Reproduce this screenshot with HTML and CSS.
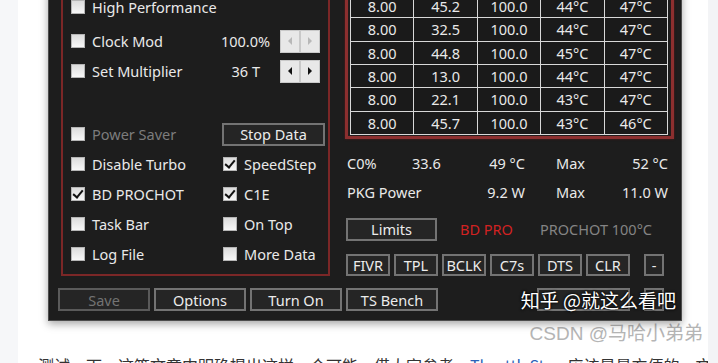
FILE: index.html
```html
<!DOCTYPE html>
<html lang="zh-CN">
<head>
  <meta charset="UTF-8">
  <meta name="viewport" content="width=device-width, initial-scale=1.0">
  <title>ThrottleStop 截图</title>
  <link rel="stylesheet" href="styles.css">
</head>
<body>
  <div class="page">
    <div class="gutter"></div>

    <main class="article">
      <div class="ts-window">
        <div class="ts-top">
          <section class="opts">
            <label class="row first"><span class="cb"></span>High Performance</label>

            <div class="row">
              <label class="grow"><span class="cb"></span>Clock Mod</label>
              <span class="val">100.0%</span>
              <span class="spin off"><i class="left"></i><i class="right"></i></span>
            </div>

            <div class="row spaced">
              <label class="grow"><span class="cb"></span>Set Multiplier</label>
              <span class="val mult">36 T</span>
              <span class="spin"><i class="left"></i><i class="right"></i></span>
            </div>

            <div class="checks">
              <label class="row disabled"><span class="cb"></span>Power Saver</label>
              <div class="row"><button class="btn stop">Stop Data</button></div>
              <label class="row"><span class="cb"></span>Disable Turbo</label>
              <label class="row"><span class="cb on"></span>SpeedStep</label>
              <label class="row"><span class="cb on"></span>BD PROCHOT</label>
              <label class="row"><span class="cb on"></span>C1E</label>
              <label class="row"><span class="cb"></span>Task Bar</label>
              <label class="row"><span class="cb"></span>On Top</label>
              <label class="row"><span class="cb"></span>Log File</label>
              <label class="row"><span class="cb"></span>More Data</label>
            </div>
          </section>

          <section class="readout">
            <div class="grid-frame">
              <table class="cores">
                <tr><td>8.00</td><td>45.2</td><td>100.0</td><td>44°C</td><td>47°C</td></tr>
                <tr><td>8.00</td><td>32.5</td><td>100.0</td><td>44°C</td><td>47°C</td></tr>
                <tr><td>8.00</td><td>44.8</td><td>100.0</td><td>45°C</td><td>47°C</td></tr>
                <tr><td>8.00</td><td>13.0</td><td>100.0</td><td>44°C</td><td>47°C</td></tr>
                <tr><td>8.00</td><td>22.1</td><td>100.0</td><td>43°C</td><td>47°C</td></tr>
                <tr><td>8.00</td><td>45.7</td><td>100.0</td><td>43°C</td><td>46°C</td></tr>
              </table>
            </div>

            <div class="stats">
              <span>C0%</span><span>33.6</span><span class="num">49 °C</span><span></span><span>Max</span><span class="num">52 °C</span>
              <span class="wide">PKG Power</span><span class="num">9.2 W</span><span></span><span>Max</span><span class="num">11.0 W</span>
            </div>

            <div class="limits-row">
              <button class="btn limits">Limits</button>
              <span class="bdpro">BD PRO</span>
              <span class="prochot">PROCHOT 100°C</span>
            </div>

            <div class="tool-row">
              <button class="btn small">FIVR</button>
              <button class="btn small">TPL</button>
              <button class="btn small">BCLK</button>
              <button class="btn small">C7s</button>
              <button class="btn small">DTS</button>
              <button class="btn small">CLR</button>
              <button class="btn tiny">-</button>
            </div>
          </section>
        </div>

        <div class="ts-bottom">
          <button class="btn wide-btn" disabled>Save</button>
          <button class="btn wide-btn">Options</button>
          <button class="btn wide-btn">Turn On</button>
          <button class="btn wide-btn">TS Bench</button>
          <button class="btn wide-btn gui"></button>
          <button class="btn tiny"></button>
        </div>

        <div class="watermark">知乎 @就这么看吧</div>
      </div>

      <p class="credit">CSDN @马哈小弟弟</p>
      <p class="body-text">测试一下，这篇文章中明确提出这样一个可能，借大家参考。<a href="#">ThrottleStop</a> 应该是最方便的，文中问题</p>
    </main>

    <div class="scrollbar"></div>
  </div>
</body>
</html>
```

FILE: styles.css
```css
* {
  box-sizing: border-box;
  margin: 0;
  padding: 0;
}

body {
  font-family: 'Noto Sans', 'Noto Sans CJK SC', sans-serif;
  background-color: #fff;
  overflow: hidden;
}

.page {
  display: flex;
  height: 363px;
}

.gutter {
  width: 18px;
  flex-shrink: 0;
  background-color: #f6f7f9;
}

.article {
  flex: 1;
  min-width: 0;
  overflow: hidden;
  padding: 0 5px 0 20px;
}

.scrollbar {
  width: 10px;
  flex-shrink: 0;
  background-color: #f3f4f6;
}

/* screenshot of the tool */
.ts-window {
  position: relative;
  width: 634px;
  margin: -33px 0 8px 10px;
  padding: 12px 7px 9px 12px;
  background-color: #1d1d1d;
  border: 1px solid #4d4d4d;
  box-shadow: 0 3px 8px rgba(0,0,0,0.35);
  color: #e9e9e9;
  font-size: 14.5px;
}

.ts-top {
  display: grid;
  grid-template-columns: 269px 329px;
  column-gap: 15px;
  align-items: start;
}

.opts {
  border: 2px solid #7b2727;
  padding: 10px 8px 5px 8px;
}

.row {
  display: flex;
  align-items: center;
  height: 30px;
}

.row.first {
  margin-bottom: 4px;
}

.row.spaced {
  margin-bottom: 33px;
}

.grow {
  flex: 1;
  display: flex;
  align-items: center;
}

.val {
  width: 80px;
  text-align: right;
  margin-right: 10px;
}

.val.mult {
  padding-right: 10px;
}

.checks {
  display: grid;
  grid-template-columns: 152px 1fr;
}

.disabled {
  color: #7c7c7c;
}

.cb {
  width: 14px;
  height: 14px;
  margin-right: 7px;
  background: linear-gradient(#dcdcdc, #f7f7f7);
  border: 1px solid #b5b5b5;
  flex-shrink: 0;
  position: relative;
}

.cb.on::after {
  content: "";
  position: absolute;
  left: 3px;
  top: 0px;
  width: 4px;
  height: 8px;
  border: solid #111;
  border-width: 0 2px 2px 0;
  transform: rotate(40deg);
}

.spin {
  display: flex;
  height: 23px;
}

.spin i {
  width: 20px;
  background-color: #e8e8e8;
  border: 1px solid #c9c9c9;
  display: flex;
  align-items: center;
  justify-content: center;
}

.spin i::before {
  content: "";
  border-top: 4px solid transparent;
  border-bottom: 4px solid transparent;
}

.spin .left::before {
  border-right: 4px solid #111;
}

.spin .right::before {
  border-left: 4px solid #111;
}

.spin.off .left::before {
  border-right-color: #b8b8b8;
}

.spin.off .right::before {
  border-left-color: #b8b8b8;
}

.btn {
  font-family: inherit;
  font-size: 14.5px;
  color: #ececec;
  background-color: #252525;
  border: 2px solid #737373;
  height: 23px;
  line-height: 18px;
}

.btn:disabled {
  color: #737373;
  border-color: #5a5a5a;
}

.btn.stop {
  width: 103px;
  margin-left: -1px;
}

/* core table */
.grid-frame {
  margin-top: 8px;
  border: 3px solid #8c2f2f;
  box-shadow: 0 0 2px #5a1a1a, inset 0 0 1px #5a1a1a;
  padding: 0 0 1px 2px;
}

.cores {
  margin-top: 3px;
  width: 318px;
  border-collapse: collapse;
  table-layout: fixed;
}

.cores td {
  height: 23.33px;
  border: 1px solid #d8d8d8;
  text-align: center;
  background-color: #1a1a1a;
  padding: 0;
  line-height: 18px;
}

.stats {
  display: grid;
  grid-template-columns: 65px 60px 53px 31px 50px 62px;
  grid-auto-rows: 29px;
  align-items: center;
  margin-top: 10px;
  padding-left: 2px;
}

.stats .wide {
  grid-column: span 2;
}

.num {
  text-align: right;
}

.limits-row {
  display: flex;
  align-items: center;
  margin-top: 11px;
  padding-left: 1px;
}

.btn.limits {
  width: 91px;
  margin-right: 23px;
}

.bdpro {
  color: #d22222;
  width: 80px;
}

.prochot {
  color: #848484;
}

.tool-row {
  display: flex;
  gap: 4px;
  margin-top: 13px;
  padding-left: 1px;
}

.btn.small {
  width: 44px;
  height: 22px;
  padding: 0;
}

.btn.tiny {
  width: 20px;
  height: 22px;
  margin-left: 10px;
  padding: 0;
}

.ts-bottom {
  display: flex;
  gap: 4px;
  margin: 12px 0 0 -3px;
}

.btn.wide-btn {
  width: 92px;
}

.btn.gui {
  width: 93px;
  margin-left: 95px;
}

.ts-bottom .btn.tiny {
  height: 23px;
}

.watermark {
  position: absolute;
  right: 5px;
  bottom: 9px;
  font-family: 'Noto Sans CJK SC', sans-serif;
  font-size: 19px;
  line-height: 23px;
  color: #fff;
  text-shadow: 0 0 2px #000, 0 0 3px #000;
}

.credit {
  margin-top: -6px;
  text-align: right;
  font-family: 'Liberation Sans', 'Noto Sans CJK SC', sans-serif;
  font-size: 19px;
  line-height: 22px;
  color: #b5b5b5;
}

.body-text {
  margin-top: 8px;
  font-family: 'Noto Sans CJK SC', sans-serif;
  font-size: 16px;
  line-height: 24px;
  color: #333;
  white-space: nowrap;
}

.body-text a {
  color: #2a62b8;
  text-decoration: none;
}
```
